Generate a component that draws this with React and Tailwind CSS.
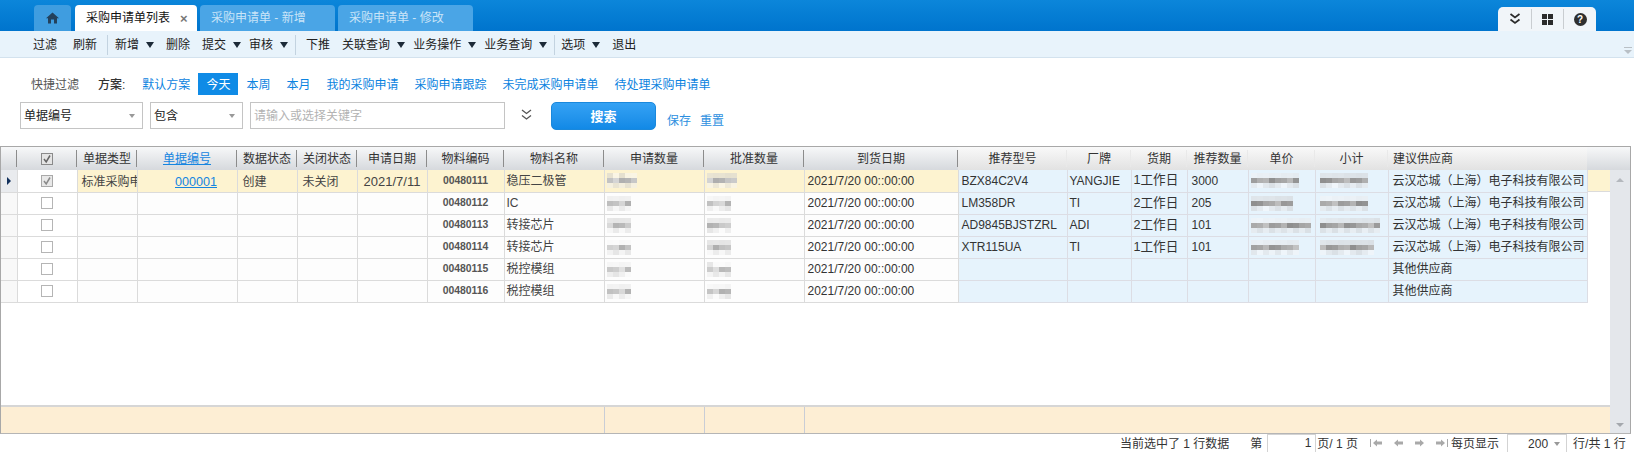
import React from "react";

const widths = [16, 60, 60, 100, 60, 60, 70, 77, 100, 100, 100, 154, 109, 64, 56, 61, 67, 73, 199];

const heads = [
  ["", "c"],
  ["__check", "c"],
  ["单据类型", "c"],
  ["单据编号", "link"],
  ["数据状态", "c"],
  ["关闭状态", "c"],
  ["申请日期", "c"],
  ["物料编码", "c"],
  ["物料名称", "c"],
  ["申请数量", "c"],
  ["批准数量", "c"],
  ["到货日期", "c"],
  ["推荐型号", "c"],
  ["厂牌", "c"],
  ["货期", "c"],
  ["推荐数量", "c"],
  ["单价", "c"],
  ["小计", "c"],
  ["建议供应商", "l"],
];

const V = "云汉芯城（上海）电子科技有限公司";
const rows = [
  { code: "00480111", name: "稳压二极管", model: "BZX84C2V4", brand: "YANGJIE", term: "1工作日", qty: "3000", vendor: V, a: 5, b: 5, p: 8, s: 8, seed: 3 },
  { code: "00480112", name: "IC", model: "LM358DR", brand: "TI", term: "2工作日", qty: "205", vendor: V, a: 4, b: 4, p: 7, s: 8, seed: 7 },
  { code: "00480113", name: "转接芯片", model: "AD9845BJSTZRL", brand: "ADI", term: "2工作日", qty: "101", vendor: V, a: 4, b: 4, p: 10, s: 10, seed: 11 },
  { code: "00480114", name: "转接芯片", model: "XTR115UA", brand: "TI", term: "1工作日", qty: "101", vendor: V, a: 4, b: 4, p: 8, s: 9, seed: 17 },
  { code: "00480115", name: "税控模组", model: "", brand: "", term: "", qty: "", vendor: "其他供应商", a: 4, b: 4, seed: 23 },
  { code: "00480116", name: "税控模组", model: "", brand: "", term: "", qty: "", vendor: "其他供应商", a: 4, b: 4, seed: 29 },
];

function Mosaic({ cols, seed, size = 6, dark = 150 }) {
  const cells = [];
  for (let y = 0; y < 3; y++) {
    for (let x = 0; x < cols; x++) {
      const n = (seed * 31 + x * 47 + y * 89 + x * y * 13) % 97;
      const middle = y === 1;
      const v = middle ? dark + (n % 55) : 205 + (n % 45);
      cells.push(<div key={x + "-" + y} style={{ backgroundColor: `rgba(${v},${v},${v},${middle ? 1 : 0.5})` }} />);
    }
  }
  return (
    <div
      className="grid blur-[0.4px]"
      style={{ gridTemplateColumns: `repeat(${cols}, ${size}px)`, gridAutoRows: "5px" }}
    >
      {cells}
    </div>
  );
}

function Arrow() {
  return <span className="ml-[7px] mr-2 w-0 h-0 border-x-[4px] border-x-transparent border-t-[6px] border-t-[#1c2a38]" />;
}

function Sep({ cls }) {
  return <span className={`w-px h-[20px] bg-[#c3d3e0] ${cls}`} />;
}

function Check({ on, head }) {
  return (
    <span
      className={`mx-auto flex items-center justify-center w-[12px] h-[12px] border ${
        head ? "border-[#8a8a8a] bg-[#e4e4e4]" : on ? "border-[#a9a9a9] bg-[#e8e8e8]" : "border-[#b5b5b5] bg-white"
      }`}
    >
      {on && (
        <svg width="10" height="10" viewBox="0 0 10 10">
          <path d="M2 5 L4.2 8 L8 1.5" fill="none" stroke={head ? "#666" : "#8a8a8a"} strokeWidth="1.5" />
        </svg>
      )}
    </span>
  );
}

function PageArrow({ dir, bar }) {
  return (
    <svg width="14" height="10" viewBox="0 0 14 10" className="shrink-0">
      <g fill="#a9a9a9" transform={dir === "l" ? "" : "translate(14 0) scale(-1 1)"}>
        {bar && <rect x="0" y="1" width="1" height="8" />}
        <path d="M3 5 L7 1.5 V3.5 H12 V6.5 H7 V8.5 Z" />
      </g>
    </svg>
  );
}

export default function App() {
  return (
    <div className="w-[1634px] h-[452px] overflow-hidden flex flex-col bg-white text-[12px] text-[#333] font-['Liberation_Sans','Noto_Sans_CJK_SC',sans-serif]">
      {/* Title bar */}
      <div className="h-[31px] shrink-0 flex bg-gradient-to-b from-[#0c86da] to-[#0074cd]">
        <div className="ml-[34px] mt-[5px] w-[37px] h-[26px] rounded-t-[4px] bg-[#3f9de0] flex items-center justify-center">
          <svg width="13" height="12" viewBox="0 0 13 12">
            <path d="M6.5 0.5 L13 6.3 H11 V11.5 H8 V7.5 H5 V11.5 H2 V6.3 H0 Z" fill="#23415c" />
          </svg>
        </div>
        <div className="ml-[4px] mt-[5px] w-[122px] h-[26px] rounded-t-[4px] bg-white flex items-center pl-[11px] text-[#111]">
          采购申请单列表
          <span className="ml-[10px] text-[#777] font-bold text-[13px] leading-none">×</span>
        </div>
        <div className="ml-[3px] mt-[5px] w-[135px] h-[26px] rounded-t-[4px] bg-[#4aa5e6] flex items-center pl-[11px] text-[#c9e4f8]">
          采购申请单 - 新增
        </div>
        <div className="ml-[3px] mt-[5px] w-[135px] h-[26px] rounded-t-[4px] bg-[#4aa5e6] flex items-center pl-[11px] text-[#c9e4f8]">
          采购申请单 - 修改
        </div>
        <div className="ml-[1025px] mt-[7px] w-[98px] h-[24px] rounded-t-[5px] bg-[#f1f5f9] flex items-center">
          <div className="w-[34px] h-[20px] flex items-center justify-center border-r border-[#c9cdd1]">
            <svg width="12" height="12" viewBox="0 0 12 12" fill="none" stroke="#2b2b2b" strokeWidth="1.7">
              <path d="M1.5 1 L6 4.5 L10.5 1" />
              <path d="M1.5 6.5 L6 10 L10.5 6.5" />
            </svg>
          </div>
          <div className="w-[32px] h-[20px] flex items-center justify-center border-r border-[#c9cdd1]">
            <div className="grid grid-cols-2 gap-px w-[11px] h-[11px]">
              <span className="bg-[#2b2b2b]" />
              <span className="bg-[#2b2b2b]" />
              <span className="bg-[#2b2b2b]" />
              <span className="bg-[#2b2b2b]" />
            </div>
          </div>
          <div className="flex-1 flex items-center justify-center">
            <span className="w-[13px] h-[13px] rounded-full bg-[#2f2f2f] text-white text-[10px] font-bold leading-[13px] text-center">?</span>
          </div>
        </div>
      </div>

      {/* Toolbar */}
      <div className="h-[27px] pt-px shrink-0 flex items-center bg-[#e8f3fb] border-b border-[#d3e2ee] text-[#222] relative">
        <span className="ml-[33px]">过滤</span>
        <span className="ml-4">刷新</span>
        <Sep cls="ml-[10px]" />
        <span className="ml-[7px]">新增</span>
        <Arrow />
        <span className="ml-1">删除</span>
        <span className="ml-3">提交</span>
        <Arrow />
        <span>审核</span>
        <Arrow />
        <Sep cls="-ml-px" />
        <span className="ml-[10px]">下推</span>
        <span className="ml-3">关联查询</span>
        <Arrow />
        <span>业务操作</span>
        <Arrow />
        <span>业务查询</span>
        <Arrow />
        <Sep cls="-ml-px" />
        <span className="ml-[6px]">选项</span>
        <Arrow />
        <span className="ml-1">退出</span>
        <svg width="8" height="8" viewBox="0 0 8 8" className="absolute right-[2px] bottom-[2px]">
          <rect y="0" width="8" height="1" fill="#b9c0c6" />
          <path d="M0 3 H8 L4 7 Z" fill="#b9c0c6" />
        </svg>
      </div>

      {/* Quick filter */}
      <div className="mt-[15px] h-[22px] flex items-center shrink-0 text-[#0b83e0]">
        <span className="ml-[31px] pt-[2px] text-[#555]">快捷过滤</span>
        <span className="ml-[19px] pt-[2px] text-[#333] font-medium">方案:</span>
        <a className="ml-[9px] px-2 pt-[2px]">默认方案</a>
        <a className="px-2 h-[22px] leading-[24px] bg-[#0f8be6] text-white">今天</a>
        <a className="px-2 pt-[2px]">本周</a>
        <a className="px-2 pt-[2px]">本月</a>
        <a className="px-2 pt-[2px]">我的采购申请</a>
        <a className="px-2 pt-[2px]">采购申请跟踪</a>
        <a className="px-2 pt-[2px]">未完成采购申请单</a>
        <a className="px-2 pt-[2px]">待处理采购申请单</a>
      </div>

      {/* Search */}
      <div className="mt-[7px] h-[28px] flex shrink-0">
        <div className="ml-5 w-[123px] h-[27px] border border-[#c4c4c4] flex items-center justify-between pl-[3px] pr-[7px] text-[#222]">
          单据编号
          <span className="w-0 h-0 border-x-[3px] border-x-transparent border-t-[4px] border-t-[#999]" />
        </div>
        <div className="ml-[7px] w-[93px] h-[27px] border border-[#c4c4c4] flex items-center justify-between pl-[3px] pr-[7px] text-[#222]">
          包含
          <span className="w-0 h-0 border-x-[3px] border-x-transparent border-t-[4px] border-t-[#999]" />
        </div>
        <div className="ml-[7px] w-[255px] h-[27px] border border-[#c4c4c4] flex items-center pl-[3px] text-[#b3b3b3]">
          请输入或选择关键字
        </div>
        <svg width="11" height="12" viewBox="0 0 11 12" fill="none" stroke="#555" strokeWidth="1.3" className="ml-[16px] mt-[7px]">
          <path d="M1 1 L5.5 4.5 L10 1" />
          <path d="M1 6.5 L5.5 10 L10 6.5" />
        </svg>
        <button className="ml-[19px] w-[105px] h-[28px] pt-px rounded-[5px] border border-[#1a88dc] bg-gradient-to-b from-[#34a2f4] to-[#1189e6] text-white text-[13px] font-bold">
          搜索
        </button>
        <a className="ml-[11px] mt-[10px] text-[#2c8fe0]">保存</a>
        <a className="ml-[9px] mt-[10px] text-[#2c8fe0]">重置</a>
      </div>

      {/* Grid */}
      <div className="mt-4 w-[1631px] h-[288px] shrink-0 border border-[#a8a8a8] border-b-[#b5b5b5] flex flex-col">
        <div className="h-[23px] shrink-0 flex bg-gradient-to-b from-[#f7f8f9] to-[#d6d9dd]">
          <table className="table-fixed border-collapse w-[1586px]">
            <colgroup>
              {widths.map((w, i) => (
                <col key={i} style={{ width: w }} />
              ))}
            </colgroup>
            <thead>
              <tr className="h-[23px]">
                {heads.map(([t, kind], i) => (
                  <th
                    key={i}
                    className={`p-0 font-normal relative ${i >= 12 ? "bg-gradient-to-b from-[#f9f9f9] to-[#e2e2e2]" : ""} ${
                      kind === "l" ? "text-left pl-[5px]" : "text-center"
                    } ${kind === "link" ? "text-[#1585e0] underline" : "text-[#333]"}`}
                  >
                    {t === "__check" ? <Check on head /> : t}
                    <span
                      className={`absolute right-0 top-[3px] bottom-[3px] w-px ${
                        i === 18 ? "hidden" : i >= 12 ? "bg-[#e9e9e9]" : "bg-[#8c8c8c]"
                      }`}
                    />
                  </th>
                ))}
              </tr>
            </thead>
          </table>
        </div>

        <div className="flex-1 min-h-0 flex">
          <div className="w-[1609px] shrink-0 flex flex-col">
            <div className="flex-1 min-h-0 flex items-start">
              <div className="w-[1609px] flex">
                <table className="table-fixed border-collapse w-[1586px]">
                  <colgroup>
                    {widths.map((w, i) => (
                      <col key={i} style={{ width: w }} />
                    ))}
                  </colgroup>
                  <tbody>
                    {rows.map((r, i) => {
                      const first = i === 0;
                      const left = first ? "bg-[#fdf3d0]" : "bg-[#fdfdfd]";
                      const edge = first ? "border-t-0" : "";
                      const low = first ? "pt-[3px] leading-[16px]" : "";
                      const blue = `bg-[#e6f3fc] border border-[#dcdde4] p-0 text-[#333] whitespace-nowrap overflow-hidden ${edge}`;
                      const cell = `border border-[#dbdbdb] p-0 ${edge} ${left}`;
                      return (
                        <tr key={i} className="h-[22px]">
                          <td className={`border border-[#dbdbdb] border-l-0 p-0 ${edge} ${first ? "bg-[#e9ebee]" : "bg-[#f8f8f8]"}`}>
                            {first && (
                              <span className="block ml-[6px] w-0 h-0 border-y-[4px] border-y-transparent border-l-[4px] border-l-[#12315c]" />
                            )}
                          </td>
                          <td className={`border border-[#dbdbdb] p-0 bg-white ${edge}`}>
                            <Check on={first} />
                          </td>
                          <td className={`${cell} pl-[4px] ${low} overflow-hidden whitespace-nowrap text-[#444]`}>{first ? "标准采购申请" : ""}</td>
                          <td className={`${cell} text-center pl-[18px] ${low}`}>
                            {first && <span className="text-[#1585e0] underline text-[12.6px]">000001</span>}
                          </td>
                          <td className={`${cell} pl-[5px] ${low} text-[#444]`}>{first ? "创建" : ""}</td>
                          <td className={`${cell} pl-[5px] ${low} text-[#444]`}>{first ? "未关闭" : ""}</td>
                          <td className={`${cell} text-center ${low} text-[#444] text-[13px]`}>{first ? "2021/7/11" : ""}</td>
                          <td className={`${cell} text-center text-[#555] font-semibold text-[10.4px]`}>{r.code}</td>
                          <td className={`${cell} pl-[2px] text-[#444]`}>{r.name}</td>
                          <td className={`${cell} pl-[2px]`}>
                            <Mosaic cols={r.a} seed={r.seed} dark={first ? 165 : 175} />
                          </td>
                          <td className={`${cell} pl-[2px]`}>
                            <Mosaic cols={r.b} seed={r.seed + 5} dark={first ? 165 : 175} />
                          </td>
                          <td className={`${cell} pl-[3px] text-[#333] whitespace-nowrap`}>2021/7/20 00::00:00</td>
                          <td className={`${blue} pl-[3px]`}>{r.model}</td>
                          <td className={`${blue} pl-[2px]`}>{r.brand}</td>
                          <td className={`${blue} pl-[2px] text-[12.6px]`}>{r.term}</td>
                          <td className={`${blue} pl-[4px]`}>{r.qty}</td>
                          <td className={`${blue} pl-[2px]`}>
                            {r.p ? <Mosaic cols={r.p} seed={r.seed + 9} dark={140} /> : null}
                          </td>
                          <td className={`${blue} pl-[4px]`}>
                            {r.s ? <Mosaic cols={r.s} seed={r.seed + 13} dark={140} /> : null}
                          </td>
                          <td className={`${blue} pl-[4px]`}>{r.vendor}</td>
                        </tr>
                      );
                    })}
                  </tbody>
                </table>
                <div className="flex-1 h-[22px] bg-[#fdf3d0] border-b border-[#dbdbdb]" />
              </div>
            </div>
            <div className="h-[28px] shrink-0 flex border-t-2 border-[#d6d6d6] bg-[#fdeed4]">
              <div className="w-[604px] border-r border-[#c9cdd6]" />
              <div className="w-[100px] border-r border-[#c9cdd6]" />
              <div className="w-[100px] border-r border-[#c9cdd6]" />
            </div>
          </div>
          <div className="flex-1 flex flex-col items-center justify-between bg-[#e4e7eb] pt-[8px] pb-[6px]">
            <span className="w-0 h-0 border-x-[4px] border-x-transparent border-b-[4px] border-b-[#b4b8bd]" />
            <span className="w-0 h-0 border-x-[4px] border-x-transparent border-t-[4px] border-t-[#a4a8ad]" />
          </div>
        </div>
      </div>

      {/* Status bar */}
      <div className="flex-1 min-h-0 flex items-center text-[#333]">
        <span className="ml-[1120px] h-[18px] pt-px">当前选中了 1 行数据</span>
        <span className="ml-[21px] h-[18px] pt-px">第</span>
        <span className="ml-[5px] w-[49px] h-[18px] border border-[#d3d3d3] border-b-0 text-right pr-[4px] leading-[17px]">1</span>
        <span className="ml-px h-[18px] pt-px">页/ 1 页</span>
        <span className="ml-[12px] flex w-[78px] justify-between">
          <PageArrow dir="l" bar />
          <PageArrow dir="l" />
          <PageArrow dir="r" />
          <PageArrow dir="r" bar />
        </span>
        <span className="ml-[3px] h-[18px] pt-px">每页显示</span>
        <span className="ml-[8px] w-[60px] h-[18px] border border-[#d3d3d3] border-b-0 flex items-center justify-end gap-[6px] pr-[6px]">
          200
          <span className="w-0 h-0 border-x-[3px] border-x-transparent border-t-[4px] border-t-[#999]" />
        </span>
        <span className="ml-[6px] h-[18px] pt-px">行/共 1 行</span>
      </div>
    </div>
  );
}
